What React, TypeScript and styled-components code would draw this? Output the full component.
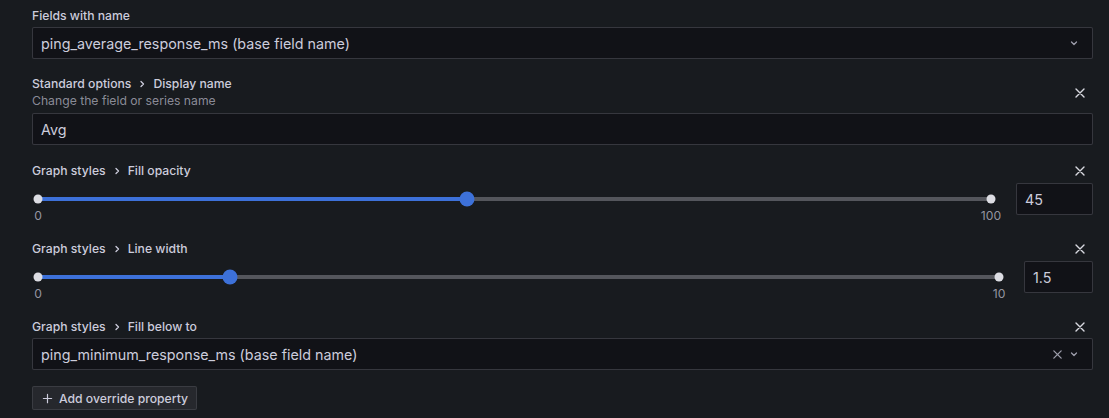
import React from "react";
import styled, { createGlobalStyle } from "styled-components";

const GlobalStyle = createGlobalStyle`
  html, body {
    margin: 0;
    padding: 0;
    background: #181b1f;
  }
  body {
    font-family: Inter, "Noto Sans", "Liberation Sans", sans-serif;
    color: #ccccdc;
    -webkit-font-smoothing: antialiased;
  }
`;

const CloseIcon: React.FC<{ size?: number }> = ({ size = 12 }) => (
  <svg width={size} height={size} viewBox="0 0 12 12" fill="none">
    <path d="M2 2L10 10M10 2L2 10" stroke="currentColor" strokeWidth="1.4" strokeLinecap="round" />
  </svg>
);

const ChevronDown = () => (
  <svg width="10" height="10" viewBox="0 0 10 10" fill="none">
    <path d="M2.5 4L5 6.5L7.5 4" stroke="currentColor" strokeWidth="1.3" strokeLinecap="round" strokeLinejoin="round" />
  </svg>
);

const ChevronRight = () => (
  <svg width="10" height="10" viewBox="0 0 10 10" fill="none">
    <path d="M4 2.5L6.5 5L4 7.5" stroke="currentColor" strokeWidth="1.3" strokeLinecap="round" strokeLinejoin="round" />
  </svg>
);

const PlusIcon = () => (
  <svg width="11" height="11" viewBox="0 0 12 12" fill="none">
    <path d="M6 1.5V10.5M1.5 6H10.5" stroke="currentColor" strokeWidth="1.3" strokeLinecap="round" />
  </svg>
);

interface SliderProps {
  min: number;
  max: number;
  fraction: number;
  value: string;
  inputWidth: number;
}

const Slider: React.FC<SliderProps> = ({ min, max, fraction, value, inputWidth }) => (
  <SliderRow>
    <SliderColumn>
      <TrackArea>
        <Track>
          <TrackFill style={{ width: `${fraction * 100}%` }} />
          <EndDot $side="left" />
          <EndDot $side="right" />
          <Thumb style={{ left: `${fraction * 100}%` }} />
        </Track>
      </TrackArea>
      <Ticks>
        <Tick>{min}</Tick>
        <Tick>{max}</Tick>
      </Ticks>
    </SliderColumn>
    <NumberInput $width={inputWidth}>{value}</NumberInput>
  </SliderRow>
);

interface PropertyProps {
  group: string;
  name: string;
  description?: string;
  gapBelow?: number;
  children: React.ReactNode;
}

const Property: React.FC<PropertyProps> = ({ group, name, description, gapBelow = 18, children }) => (
  <Section $gapBelow={gapBelow}>
    <Header>
      <HeaderText>
        <Label>
          {group}
          <Crumb>
            <ChevronRight />
          </Crumb>
          {name}
        </Label>
        {description && <Description>{description}</Description>}
      </HeaderText>
      <IconButton>
        <CloseIcon size={12} />
      </IconButton>
    </Header>
    {children}
  </Section>
);

const App: React.FC = () => {
  return (
    <>
      <GlobalStyle />
      <Pane>
        <Section $gapBelow={17}>
          <Label $spaced>Fields with name</Label>
          <Field>
            <FieldText>ping_average_response_ms (base field name)</FieldText>
            <Suffix>
              <ChevronDown />
            </Suffix>
          </Field>
        </Section>

        <Property group="Standard options" name="Display name" description="Change the field or series name">
          <Field>
            <FieldText>Avg</FieldText>
          </Field>
        </Property>

        <Property group="Graph styles" name="Fill opacity" gapBelow={17}>
          <Slider min={0} max={100} fraction={0.45} value="45" inputWidth={77} />
        </Property>

        <Property group="Graph styles" name="Line width" gapBelow={17}>
          <Slider min={0} max={10} fraction={0.2} value="1.5" inputWidth={69} />
        </Property>

        <Property group="Graph styles" name="Fill below to" gapBelow={16}>
          <Field>
            <FieldText>ping_minimum_response_ms (base field name)</FieldText>
            <Suffix>
              <SuffixIcon>
                <CloseIcon size={11} />
              </SuffixIcon>
              <ChevronDown />
            </Suffix>
          </Field>
        </Property>

        <AddButton>
          <PlusIcon />
          Add override property
        </AddButton>
      </Pane>
    </>
  );
};

export default App;

const Pane = styled.div`
  width: 1109px;
  height: 418px;
  box-sizing: border-box;
  padding: 8px 16px 0 32px;
  display: flex;
  flex-direction: column;
  align-items: flex-start;
  overflow: hidden;
`;

const Section = styled.div<{ $gapBelow: number }>`
  width: 100%;
  display: flex;
  flex-direction: column;
  margin-bottom: ${(p) => p.$gapBelow}px;
`;

const Header = styled.div`
  display: flex;
  align-items: center;
  justify-content: space-between;
  margin-bottom: 3px;
`;

const HeaderText = styled.div`
  display: flex;
  flex-direction: column;
`;

const Label = styled.div<{ $spaced?: boolean }>`
  display: flex;
  align-items: center;
  font-size: 12.2px;
  line-height: 16px;
  font-weight: 500;
  color: #ccccdc;
  margin-bottom: ${(p) => (p.$spaced ? 3 : 0)}px;
`;

const Crumb = styled.span`
  display: inline-flex;
  align-items: center;
  color: #ccccdc;
  margin: 0 6px;
`;

const Description = styled.div`
  font-size: 12.2px;
  line-height: 18px;
  color: rgba(204, 204, 220, 0.65);
`;

const IconButton = styled.button`
  display: flex;
  align-items: center;
  justify-content: center;
  width: 16px;
  height: 16px;
  padding: 0;
  margin-right: 5px;
  border: none;
  background: transparent;
  color: #d8d9e0;
  cursor: pointer;
`;

const Field = styled.div`
  box-sizing: border-box;
  width: 100%;
  height: 32px;
  display: flex;
  align-items: center;
  padding: 0 8px;
  background: #111217;
  border: 1px solid rgba(204, 204, 220, 0.2);
  border-radius: 2px;
`;

const FieldText = styled.span`
  flex: 1;
  font-size: 14.3px;
  color: #ccccdc;
  white-space: nowrap;
`;

const Suffix = styled.span`
  display: flex;
  align-items: center;
  gap: 6px;
  color: rgba(204, 204, 220, 0.75);
  margin-right: 5px;
`;

const SuffixIcon = styled.span`
  display: flex;
  align-items: center;
`;

const SliderRow = styled.div`
  display: flex;
  align-items: flex-start;
  gap: 19px;
  margin-top: 1px;
`;

const SliderColumn = styled.div`
  flex: 1;
  display: flex;
  flex-direction: column;
  padding: 0 6px;
`;

const TrackArea = styled.div`
  height: 32px;
  display: flex;
  align-items: center;
`;

const Track = styled.div`
  position: relative;
  width: 100%;
  height: 4px;
  border-radius: 2px;
  background: #54565c;
`;

const TrackFill = styled.div`
  position: absolute;
  left: 0;
  top: 0;
  bottom: 0;
  border-radius: 2px;
  background: #3d71d9;
`;

const EndDot = styled.span<{ $side: "left" | "right" }>`
  position: absolute;
  top: 50%;
  left: ${(p) => (p.$side === "left" ? "0" : "100%")};
  width: 9px;
  height: 9px;
  border-radius: 50%;
  background: #dcdde3;
  transform: translate(-50%, -50%);
`;

const Thumb = styled.span`
  position: absolute;
  top: 50%;
  width: 15px;
  height: 15px;
  border-radius: 50%;
  background: #3d71d9;
  transform: translate(-50%, -50%);
`;

const Ticks = styled.div`
  display: flex;
  justify-content: space-between;
  margin: -7px -20px 0;
  height: 16px;
`;

const Tick = styled.span`
  width: 40px;
  text-align: center;
  font-size: 12.2px;
  line-height: 16px;
  color: rgba(204, 204, 220, 0.7);
`;

const NumberInput = styled.div<{ $width: number }>`
  box-sizing: border-box;
  width: ${(p) => p.$width}px;
  height: 32px;
  display: flex;
  align-items: center;
  padding: 0 8px;
  font-size: 14.3px;
  color: #ccccdc;
  background: #111217;
  border: 1px solid rgba(204, 204, 220, 0.2);
  border-radius: 2px;
`;

const AddButton = styled.button`
  display: flex;
  align-items: center;
  gap: 6px;
  height: 24px;
  padding: 0 8px 0 9px;
  font-family: inherit;
  font-size: 12.2px;
  font-weight: 500;
  color: #ccccdc;
  background: rgba(204, 204, 220, 0.08);
  border: 1px solid rgba(204, 204, 220, 0.12);
  border-radius: 2px;
  cursor: pointer;
`;
